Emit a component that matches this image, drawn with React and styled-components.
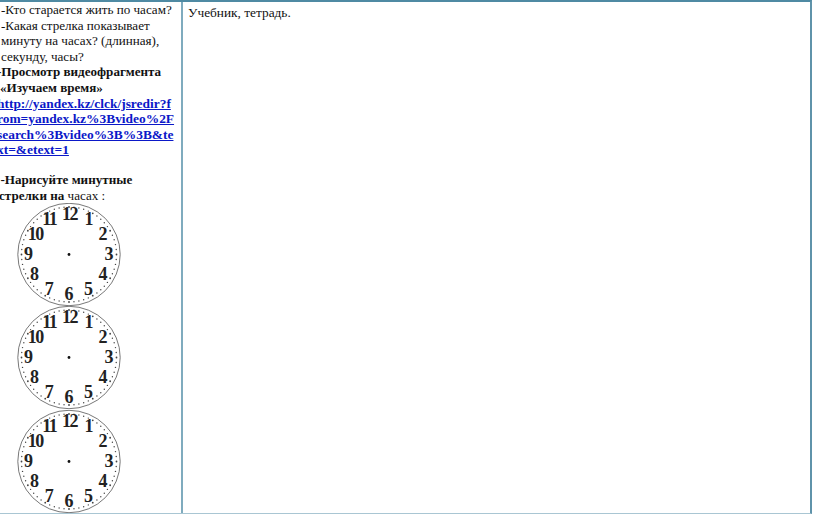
import React from "react";
import styled, { createGlobalStyle } from "styled-components";

const Global = createGlobalStyle`
  html, body { margin: 0; padding: 0; background: #fff; overflow: hidden; }
  #root { width: 816px; height: 514px; }
`;

const Page = styled.div`
  width: 816px;
  height: 514px;
  overflow: hidden;
  background: #fff;
  font-family: "Liberation Serif", "Times New Roman", serif;
  font-size: 13.1px;
  line-height: 15.6px;
  color: #111;
`;

const Table = styled.div`
  display: grid;
  grid-template-columns: 183px 1fr;
  width: 812px;
  height: 514px;
  box-sizing: border-box;
  border-top: 2px solid #4f8aa3;
  border-right: 2px solid #5f93aa;
  border-bottom: 1px solid #a9c6d3;
`;

const LeftCell = styled.div`
  border-right: 2px solid #7fabbe;
  overflow: hidden;
`;

const LeftText = styled.div``;

const Line = styled.div`
  white-space: nowrap;
  min-height: 14px;
  margin-left: ${(p) => p.$indent || 0}px;
  font-weight: ${(p) => (p.$bold ? 700 : 400)};
`;

const Light = styled.span`
  font-weight: 400;
`;

const Link = styled.a`
  display: block;
  margin-left: -3px;
  color: #0b18c8;
  font-weight: 700;
  font-size: 13.43px;
  text-decoration: underline;
  white-space: nowrap;
`;

const Clocks = styled.div`
  display: flex;
  flex-direction: column;
  align-items: flex-start;
  margin: -0.5px 0 0 16.5px;
`;

const ClockSvg = styled.svg`
  display: block;
  width: 104px;
  height: 103.5px;
  flex: none;
`;

const RightCell = styled.div`
  padding: 3px 5px;
  overflow: hidden;
  font-size: 13.33px;
`;

const nums = [
  ["12", 52.5, 10.7], ["1", 72, 15.7], ["2", 86, 30.7], ["3", 92, 50.7], ["4", 86, 71], ["5", 71.5, 85.5],
  ["6", 52, 90.5], ["7", 32.3, 85.5], ["8", 17.6, 71], ["9", 11.6, 50.7], ["10", 18.3, 30.5], ["11", 32.3, 15.5],
];

function Clock() {
  const ticks = [];
  for (let i = 0; i < 60; i++) {
    const a = (i * Math.PI) / 30;
    const big = i % 5 === 0;
    ticks.push(
      <circle
        key={i}
        cx={52 + 47.5 * Math.sin(a)}
        cy={51.5 - 47.5 * Math.cos(a)}
        r={big ? 0.9 : 0.7}
        fill="#444"
      />
    );
  }
  return (
    <ClockSvg viewBox="0 0 104 103.5">
      <circle cx="52" cy="51.5" r="51.2" fill="#fff" stroke="#555" strokeWidth="0.8" />
      {ticks}
      <circle cx="52" cy="51.5" r="1.4" fill="#111" />
      {nums.map(([t, x, y]) => (
        <text
          key={t}
          x={x}
          y={y}
          dy="0.34em"
          textAnchor="middle"
          fontFamily="'Liberation Serif', serif"
          fontWeight="700"
          fontSize="18"
          letterSpacing={t.length > 1 ? "-1.5" : "0"}
          fill="#222"
        >
          {t}
        </text>
      ))}
    </ClockSvg>
  );
}

export default function App() {
  return (
    <Page>
      <Global />
      <Table>
        <LeftCell>
          <LeftText>
            <Line $indent={1}>-Кто старается жить по часам?</Line>
            <Line $indent={1}>-Какая стрелка показывает</Line>
            <Line $indent={1}>минуту на часах? (длинная),</Line>
            <Line $indent={1}>секунду, часы?</Line>
            <Line $bold $indent={-3}>-Просмотр видеофрагмента</Line>
            <Line $bold>«Изучаем время»</Line>
            <Link href="#">http://yandex.kz/clck/jsredir?f</Link>
            <Link href="#">rom=yandex.kz%3Bvideo%2F</Link>
            <Link href="#">search%3Bvideo%3B%3B&amp;te</Link>
            <Link href="#">xt=&amp;etext=1</Link>
            <Line />
            <Line $bold $indent={0.5}>-Нарисуйте минутные</Line>
            <Line $bold $indent={-1}>
              стрелки на <Light>часах :</Light>
            </Line>
          </LeftText>
          <Clocks>
            <Clock />
            <Clock />
            <Clock />
          </Clocks>
        </LeftCell>
        <RightCell>Учебник, тетрадь.</RightCell>
      </Table>
    </Page>
  );
}
